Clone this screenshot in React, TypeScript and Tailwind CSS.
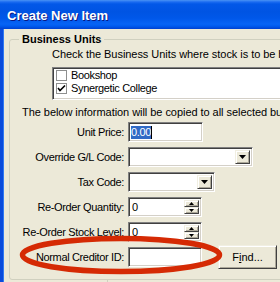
import React from "react";

const sunken =
  "border border-t-[#808080] border-l-[#808080] border-r-white border-b-white shadow-[inset_1px_1px_0_#404040,inset_-1px_-1px_0_#D4D0C8] bg-white";
const raised =
  "bg-[#ECE9D8] border border-t-[#F1EFE2] border-l-[#F1EFE2] border-r-[#404040] border-b-[#404040] shadow-[inset_1px_1px_0_#FFFFFF,inset_-1px_-1px_0_#ACA899]";

function Tri({ up = false, w = 7, h = 4 }: { up?: boolean; w?: number; h?: number }) {
  return (
    <svg width={w} height={h} viewBox={`0 0 ${w} ${h}`} className="block">
      <polygon
        points={up ? `0,${h} ${w / 2},0 ${w},${h}` : `0,0 ${w},0 ${w / 2},${h}`}
        fill="#000"
      />
    </svg>
  );
}

function DropButton() {
  return (
    <div className={`${raised} w-[15px] h-full flex items-center justify-center`}>
      <Tri />
    </div>
  );
}

function Spin() {
  return (
    <div className="flex flex-col w-[15px] h-full">
      <div className={`${raised} h-[8px] flex items-center justify-center`}>
        <Tri up w={5} h={3} />
      </div>
      <div className={`${raised} h-[8px] flex items-center justify-center`}>
        <Tri w={5} h={3} />
      </div>
    </div>
  );
}

function Row({ label, children }: { label: string; children: React.ReactNode }) {
  return (
    <div className="flex h-[20px] items-center">
      <div className="w-[114px] text-right">{label}</div>
      <div className="ml-[4px] flex items-center h-full">{children}</div>
    </div>
  );
}

function Check({ checked }: { checked?: boolean }) {
  return (
    <div className="w-[11px] h-[11px] border border-[#8E8F8F] bg-white flex items-center justify-center">
      {checked && (
        <svg width="9" height="9" viewBox="0 0 9 9">
          <path d="M1 4 L3 6.5 L8 1.5" stroke="#000" strokeWidth="1.6" fill="none" />
        </svg>
      )}
    </div>
  );
}

export default function App() {
  return (
    <div className="relative w-[280px] h-[282px] overflow-hidden bg-[#ECE9D8] flex flex-col font-['Liberation_Sans',Arial,sans-serif] text-[11px] leading-[13px] text-black">
      {/* title bar */}
      <div className="h-[29px] shrink-0 pl-[7px] pt-[2px] flex items-center text-white font-bold text-[13px] [text-shadow:1px_1px_0_#0A1883] bg-[linear-gradient(to_bottom,#4A93F4_0px,#1B6BF1_2px,#0358E8_4px,#0054E3_12px,#0057E9_18px,#0764F5_24px,#005CF0_26px,#0041D0_29px)]">
        Create New Item
      </div>

      <div className="flex flex-1 min-h-0">
        <div className="w-[4px] shrink-0 bg-[#0A4BDB] border-r border-r-[#3079F2]" />

        <div className="flex-1 pl-[5px] pt-[10px] tracking-[-0.35px]">
          {/* group box */}
          <div className="relative w-[300px] h-[241px] border border-[#D0D0BF] rounded-[3px]">
            <div className="absolute left-[9px] -top-[7px] px-[3px] bg-[#ECE9D8] font-bold tracking-normal">
              Business Units
            </div>

            <div className="ml-[42px] mt-[8px] whitespace-nowrap tracking-[-0.05px]">
              Check the Business Units where stock is to be held.
            </div>

            <div className={`${sunken} ml-[42px] mt-[6px] w-[260px] h-[33px] pt-[1px] pl-[3px]`}>
              <div className="flex items-center h-[13px] gap-[4px]">
                <Check />
                <span>Bookshop</span>
              </div>
              <div className="flex items-center h-[13px] gap-[4px]">
                <Check checked />
                <span>Synergetic College</span>
              </div>
            </div>

            <div className="ml-[12px] mt-[6px] whitespace-nowrap tracking-[-0.05px]">
              The below information will be copied to all selected business units.
            </div>

            <div className="mt-[3px] flex flex-col gap-[5px]">
              <Row label="Unit Price:">
                <div className={`${sunken} w-[75px] h-[20px] pl-[2px] flex items-center`}>
                  <span className="bg-[#316AC5] text-white">0.00</span>
                  <span className="w-[1px] h-[13px] bg-black" />
                </div>
              </Row>
              <Row label="Override G/L Code:">
                <div className={`${sunken} w-[125px] h-[20px] p-[2px] flex justify-end`}>
                  <DropButton />
                </div>
              </Row>
              <Row label="Tax Code:">
                <div className={`${sunken} w-[87px] h-[20px] p-[2px] flex justify-end`}>
                  <DropButton />
                </div>
              </Row>
              <Row label="Re-Order Quantity:">
                <div className={`${sunken} w-[74px] h-[20px] p-[2px] flex items-center`}>
                  <span className="flex-1 pl-[1px]">0</span>
                  <Spin />
                </div>
              </Row>
              <Row label="Re-Order Stock Level:">
                <div className={`${sunken} w-[74px] h-[20px] p-[2px] flex items-center`}>
                  <span className="flex-1 pl-[1px]">0</span>
                  <Spin />
                </div>
              </Row>
              <Row label="Normal Creditor ID:">
                <div className={`${sunken} w-[74px] h-[20px]`} />
                <button className={`${raised} ml-[16px] w-[59px] h-[24px] flex items-center justify-center tracking-normal`}>
                  F<span className="underline">i</span>nd...
                </button>
              </Row>
            </div>
          </div>
          <div className="ml-[98px] w-px h-[4px] bg-[#D0D0BF]" />
        </div>
      </div>

      {/* red annotation ellipse */}
      <svg className="absolute left-0 top-0 pointer-events-none" width="280" height="282">
        <ellipse cx="121" cy="255" rx="98.5" ry="16.5" fill="none" stroke="#D52A04" strokeWidth="5.5" />
      </svg>
    </div>
  );
}
